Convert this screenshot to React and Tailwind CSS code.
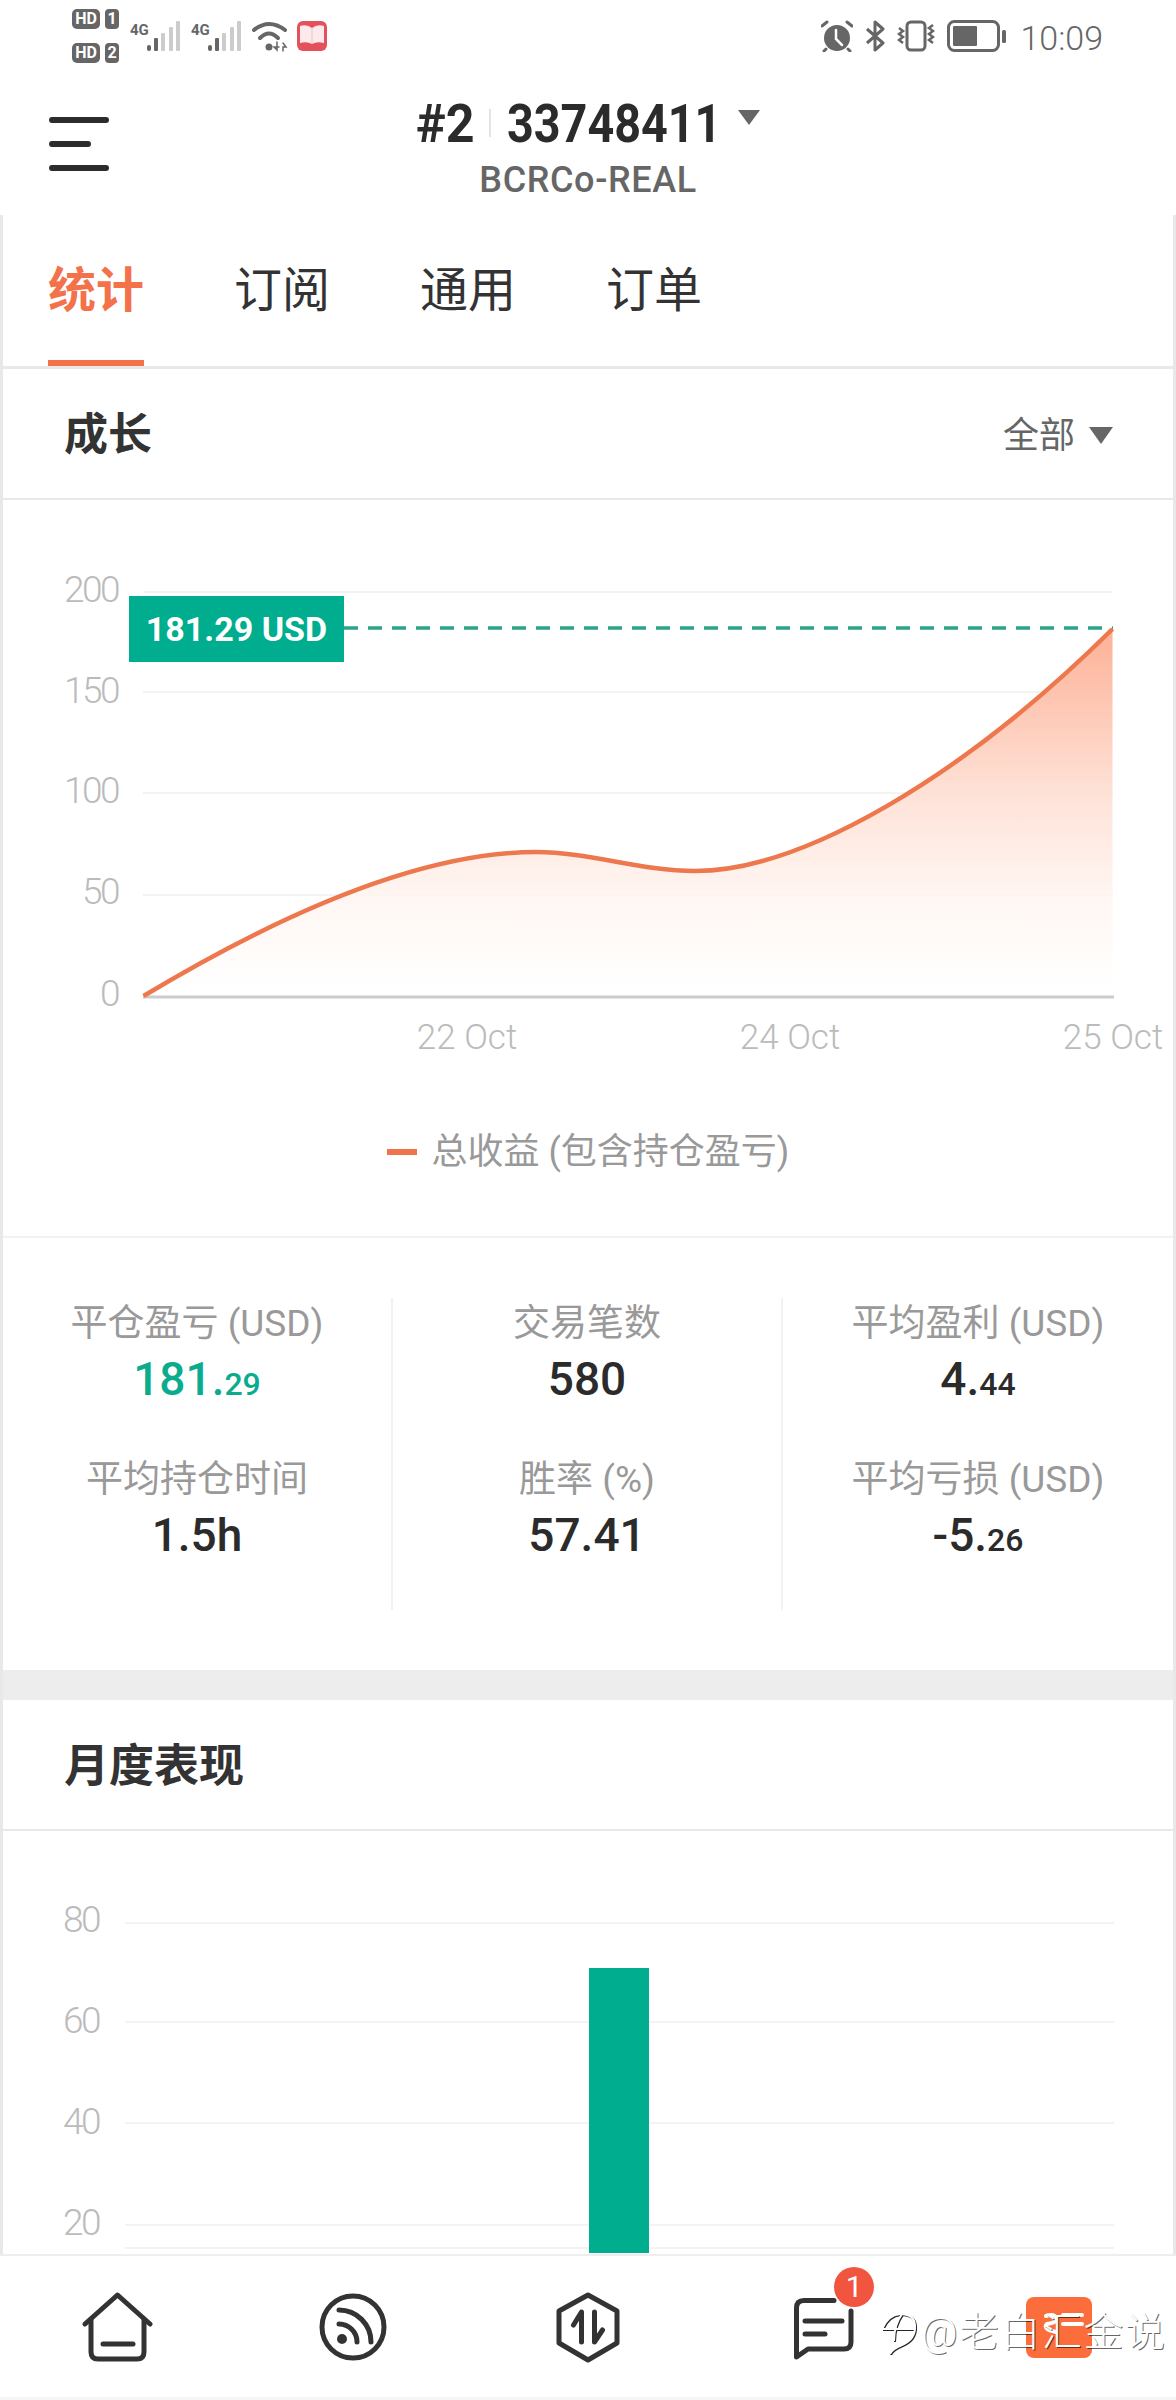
import React from 'react';

// growth line, traced from the chart
const curve =
  'M143.5 996 C250 932 405 852 536 852 C590 852 640 871 695 871 C800 871 960 780 1112.5 629';

const SignalIcon = () => (
  <svg width="55" height="36" viewBox="0 0 55 36">
    <text x="0" y="17" className="fill-[#666] text-[15px] font-bold">4G</text>
    <rect x="17" y="27" width="4" height="6" rx="2" fill="#666" />
    <rect x="24" y="20" width="4" height="13" rx="1" fill="#666" />
    <rect x="31" y="15" width="4" height="18" rx="1" fill="#ccc" />
    <rect x="39" y="9" width="4" height="24" rx="1" fill="#ccc" />
    <rect x="46" y="3" width="4" height="30" rx="1" fill="#ccc" />
  </svg>
);

const WifiIcon = () => (
  <svg width="36" height="34" viewBox="0 0 36 34" fill="none" stroke="#666" strokeWidth="4" strokeLinecap="round">
    <path d="M2 12Q17 0 33 12" />
    <path d="M8 20Q17 11 26 20" />
    <circle cx="17" cy="29" r="3.5" fill="#666" stroke="none" />
    <path d="M25 24v8l-3-3h5" strokeWidth="1.5" />
    <path d="M31 25l3 4h-3v4" strokeWidth="1.5" />
  </svg>
);

const BookIcon = () => (
  <svg width="30" height="30" viewBox="0 0 30 30">
    <rect width="30" height="30" rx="6" fill="#e2515c" />
    <path d="M3 5Q10 3 15 7Q20 3 27 5V22Q20 20 15 23Q10 20 3 22Z" fill="#fbe9ec" />
    <path d="M15 7V23" stroke="#f3c3c9" strokeWidth="1" />
  </svg>
);

const AlarmIcon = () => (
  <svg width="32" height="32" viewBox="0 0 32 32" fill="none" strokeLinecap="round">
    <circle cx="16" cy="18" r="13" fill="#666" />
    <path d="M15 10V19L21 25" stroke="#fff" strokeWidth="2.5" />
    <path d="M1 6L6 2M31 6L26 2M5 29L3 31M27 29L29 31" stroke="#666" strokeWidth="3" />
  </svg>
);

const BluetoothIcon = () => (
  <svg width="21" height="32" viewBox="0 0 21 32" fill="none" stroke="#666" strokeWidth="3" strokeLinejoin="round">
    <path d="M2 9L18 23L10 30V2L18 9L2 23" />
  </svg>
);

const VibrateIcon = () => (
  <svg width="38" height="32" viewBox="0 0 38 32" fill="none" stroke="#666" strokeWidth="2.5">
    <rect x="10" y="2" width="18" height="28" rx="4" strokeWidth="3" />
    <path d="M2 8l4 3l-4 3l4 3l-4 3l4 3" />
    <path d="M36 5l-4 3l4 3l-4 3l4 3l-4 3l4 3" />
  </svg>
);

const BatteryIcon = () => (
  <svg width="59" height="32" viewBox="0 0 59 32">
    <rect x="1.5" y="1.5" width="50" height="29" rx="6" fill="none" stroke="#666" strokeWidth="3" />
    <rect x="6" y="6" width="24" height="20" rx="1" fill="#666" />
    <rect x="55" y="10" width="4" height="13" rx="1.5" fill="#666" />
  </svg>
);

const HdBadge = ({ n }) => (
  <div className="flex gap-[5px] h-[20px] text-white text-[16px] font-bold leading-[20px] text-center">
    <span className="w-[28px] bg-[#666] rounded-[5px]">HD</span>
    <span className="w-[14px] bg-[#666] rounded-[4px]">{n}</span>
  </div>
);

const StatusBar = () => (
  <div className="h-[70px] flex justify-between">
    <div className="flex items-start pl-[72px] pt-[9px]">
      <div className="flex flex-col gap-[14px] w-[47px]">
        <HdBadge n="1" />
        <HdBadge n="2" />
      </div>
      <div className="ml-[11px] mt-[9px]"><SignalIcon /></div>
      <div className="ml-[6px] mt-[9px]"><SignalIcon /></div>
      <div className="ml-[6px] mt-[9px]"><WifiIcon /></div>
      <div className="ml-[9px] mt-[12px]"><BookIcon /></div>
    </div>
    <div className="flex items-start pr-[73px] pt-[20px]">
      <AlarmIcon />
      <div className="ml-[12px]"><BluetoothIcon /></div>
      <div className="ml-[11px]"><VibrateIcon /></div>
      <div className="ml-[12px]"><BatteryIcon /></div>
      <span className="ml-[14px] text-[34px] font-light leading-[36px] text-[#666]">10:09</span>
    </div>
  </div>
);

const Header = () => (
  <div className="h-[145px] grid grid-cols-[1fr_auto_1fr]">
    <div className="pl-[49px] pt-[47px] flex flex-col gap-[18px]">
      <div className="w-[60px] h-[6px] rounded-full bg-[#2c2c2c]" />
      <div className="w-[42px] h-[6px] rounded-full bg-[#2c2c2c]" />
      <div className="w-[60px] h-[6px] rounded-full bg-[#2c2c2c]" />
    </div>
    <div className="flex flex-col items-center pt-[24px]">
      <div className="flex items-center h-[58px] text-[54px] font-bold text-[#2b2b2b]">
        {/* the app font is narrower than Roboto */}
        <span className="w-[58px] origin-left scale-x-[.93] whitespace-nowrap">#2</span>
        <span className="w-[2px] h-[28px] ml-[15px] mr-[16px] bg-[#e4e4e4]" />
        <span className="w-[211px] origin-left scale-x-[.865] whitespace-nowrap">33748411</span>
        <svg className="ml-[20px] mb-[12px]" width="22" height="15" viewBox="0 0 22 15">
          <polygon points="0,0 22,0 11,15" fill="#666" />
        </svg>
      </div>
      <div className="mt-[6px] text-[36px] leading-[44px] font-medium tracking-[0.6px] text-[#666]">BCRCo-REAL</div>
    </div>
    <div />
  </div>
);

const Tabs = () => (
  <div className="h-[154px] flex gap-[90px] pl-[45px] border-b-[3px] border-[#e8e8e8] text-[48px] text-[#333] whitespace-nowrap">
    <div className="w-[96px] flex items-center justify-center pt-[6px] border-b-[6px] border-[#f3724a] text-[#f3724a] font-bold">统计</div>
    <div className="w-[96px] flex items-center justify-center pt-[6px] pb-[6px]">订阅</div>
    <div className="w-[96px] flex items-center justify-center pt-[6px] pb-[6px]">通用</div>
    <div className="w-[96px] flex items-center justify-center pt-[6px] pb-[6px]">订单</div>
  </div>
);

const GrowthChart = () => (
  <div className="relative h-[590px]">
    <svg className="block" width="1170" height="590" viewBox="3 500 1170 590">
      <defs>
        <linearGradient id="area" gradientUnits="userSpaceOnUse" x1="0" y1="629" x2="0" y2="990">
          <stop offset="0" stopColor="#fdab8e" />
          <stop offset="0.45" stopColor="#fedfd3" />
          <stop offset="0.75" stopColor="#fff6f2" />
          <stop offset="1" stopColor="#ffffff" />
        </linearGradient>
      </defs>
      {[592, 692, 793, 895].map((y) => (
        <line key={y} x1="143" x2="1113" y1={y} y2={y} stroke="#f3f3f3" strokeWidth="2" />
      ))}
      <path d={`${curve} V997 H143.5 Z`} fill="url(#area)" fillOpacity="0.93" />
      <line x1="143" x2="1114" y1="997" y2="997" stroke="#ccc" strokeWidth="3" />
      <line x1="344" x2="1113" y1="628" y2="628" stroke="#2aa58a" strokeWidth="3.5" strokeDasharray="14 10" />
      <path d={curve} fill="none" stroke="#ee784e" strokeWidth="4.5" />
      {[['200', 602], ['150', 703], ['100', 803], ['50', 904], ['0', 1006]].map(([t, y]) => (
        <text key={t} x="118" y={y} textAnchor="end" className="fill-[#bbb] text-[37px] font-light tracking-[-2.5px]">{t}</text>
      ))}
      {[['22 Oct', 467], ['24 Oct', 790], ['25 Oct', 1113]].map(([t, x]) => (
        <text key={t} x={x} y="1049" textAnchor="middle" className="fill-[#bbb] text-[35px] font-light">{t}</text>
      ))}
    </svg>
    <div className="absolute left-[126px] top-[96px] w-[215px] h-[66px] flex items-center justify-center bg-[#00ad8e] text-white text-[34px] font-bold">
      181.29 USD
    </div>
  </div>
);

const Legend = () => (
  <div className="h-[148px] pb-[22px] flex items-center justify-center gap-[15px] border-b-2 border-[#f2f2f2]">
    <div className="w-[30px] h-[6px] bg-[#f0744b]" />
    <span className="text-[36px] text-[#999]">总收益 (包含持仓盈亏)</span>
  </div>
);

const Stat = ({ label, big, small, color = 'text-[#2b2b2b]' }) => (
  <div className="h-[110px] flex flex-col items-center">
    <div className="h-[50px] text-[37px] leading-[50px] text-[#999]">{label}</div>
    <div className={`h-[60px] text-[46px] leading-[60px] font-medium ${color}`}>
      {big}
      {small && <span className="text-[32px]">{small}</span>}
    </div>
  </div>
);

const StatsGrid = () => (
  <div className="pt-[60px] pb-[60px] grid grid-cols-3">
    <div className="flex flex-col gap-[46px] h-[312px] pt-[1px] border-r-2 border-[#f2f2f2]">
      <Stat label="平仓盈亏 (USD)" big="181." small="29" color="text-[#0bab90]" />
      <Stat label="平均持仓时间" big="1.5h" />
    </div>
    <div className="flex flex-col gap-[46px] h-[312px] pt-[1px] border-r-2 border-[#f2f2f2]">
      <Stat label="交易笔数" big="580" />
      <Stat label="胜率 (%)" big="57.41" />
    </div>
    <div className="flex flex-col gap-[46px] h-[312px] pt-[1px]">
      <Stat label="平均盈利 (USD)" big="4." small="44" />
      <Stat label="平均亏损 (USD)" big="-5." small="26" />
    </div>
  </div>
);

const MonthlyChart = () => (
  <svg className="block" width="1170" height="422" viewBox="3 1833 1170 422">
    {[1925, 2024, 2125, 2227, 2250].map((y) => (
      <line key={y} x1="125" x2="1114" y1={y} y2={y} stroke="#f3f3f3" strokeWidth="2" />
    ))}
    <rect x="589" y="1970" width="60" height="285" fill="#00ad8e" />
    {[['80', 1934], ['60', 2035], ['40', 2136], ['20', 2237]].map(([t, y]) => (
      <text key={t} x="99" y={y} textAnchor="end" className="fill-[#bbb] text-[37px] font-light tracking-[-2.5px]">{t}</text>
    ))}
  </svg>
);

const navIcon = { width: 72, height: 72, viewBox: '0 0 72 72', fill: 'none', stroke: '#333', strokeWidth: 5, strokeLinecap: 'round', strokeLinejoin: 'round' };

const BottomNav = () => (
  <div className="relative h-[146px] grid grid-cols-5 items-center bg-white border-t-2 border-[#eee] border-b-[3px] border-b-[#f6f6f6]">
    <div className="flex justify-center">
      <svg {...navIcon}>
        <path d="M3 33L35.5 4L68 33" />
        <path d="M9 28V61Q9 68 16 68H55Q62 68 62 61V28" />
        <path d="M21 53H51" />
      </svg>
    </div>
    <div className="flex justify-center">
      <svg {...navIcon}>
        <circle cx="36" cy="36" r="31" />
        <circle cx="25" cy="48" r="5" fill="#333" stroke="none" />
        <path d="M22 33A18 18 0 0 1 40 51" />
        <path d="M22 19A32 32 0 0 1 54 51" />
      </svg>
    </div>
    <div className="flex justify-center">
      <svg {...navIcon}>
        <path d="M36 4L65 20V52L36 69L7 52V20Z" />
        <path d="M29.5 51V21L21.5 34" />
        <path d="M42.5 21V51L50.5 39" />
      </svg>
    </div>
    <div className="flex justify-center">
      <div className="relative">
        <svg className="block" {...navIcon}>
          <path d="M47 9.5H17Q9.5 9.5 9.5 17V66L21 58H57Q64 58 64 51V20" />
          <path d="M18 30H55" />
          <path d="M18 43H38" />
        </svg>
        <div className="absolute left-[47px] top-[-24px] w-[40px] h-[40px] rounded-full bg-[#f2553f] text-white text-[30px] leading-[40px] text-center">1</div>
      </div>
    </div>
    <div className="flex justify-center">
      <svg width="72" height="72" viewBox="0 0 72 72" fill="none">
        <rect x="4" y="6" width="66" height="61" rx="8" fill="#fb6e3c" />
        <path d="M24 25Q33 22 34 28Q34 32 25 33Q20 38 34 41" stroke="#fff" strokeWidth="4" strokeLinecap="round" />
        <path d="M41 24H60M41 33H60" stroke="#fff" strokeWidth="4" strokeLinecap="round" />
      </svg>
    </div>
    {/* watermark sitting over the nav */}
    <div className="absolute left-[880px] top-[54px] flex items-center text-white font-light text-[40px] tracking-[1.5px] leading-[46px] [text-shadow:1px_1px_0_rgba(0,0,0,0.6)]">
      <svg width="38" height="44" viewBox="0 0 38 44" fill="none" stroke="#fff" strokeWidth="2" className="mr-[3px] drop-shadow-[1px_1px_0_rgba(0,0,0,0.85)]">
        <path d="M2 18Q8 4 20 3Q34 3 35 14Q36 28 22 34Q12 38 10 43" />
        <path d="M2 18H34" />
        <path d="M22 3Q14 14 14 30" />
      </svg>
      <span>@老白汇金说</span>
    </div>
  </div>
);

const App = () => (
  <div className="w-[1176px] h-[2400px] flex flex-col bg-white overflow-hidden font-['Roboto','Noto_Sans_CJK_SC',sans-serif]">
    <StatusBar />
    <Header />
    <div className="flex-1 min-h-0 overflow-hidden border-x-[3px] border-[#e8e8e8]">
      <Tabs />
      <div className="h-[131px] flex items-center justify-between pl-[61px] pr-[60px] pt-[2px] border-b-2 border-[#e8e8e8]">
        <span className="text-[44px] font-bold text-[#333]">成长</span>
        <div className="flex items-center gap-[14px] pt-[2px] text-[36px] text-[#666]">
          全部
          <svg width="24" height="17" viewBox="0 0 24 17"><polygon points="0,0 24,0 12,17" fill="#666" /></svg>
        </div>
      </div>
      <GrowthChart />
      <Legend />
      <StatsGrid />
      <div className="h-[30px] bg-[#ededed]" />
      <div className="h-[131px] flex items-center pl-[61px] pt-[4px] border-b-2 border-[#e8e8e8]">
        <span className="text-[45px] font-bold text-[#333]">月度表现</span>
      </div>
      <MonthlyChart />
    </div>
    <BottomNav />
  </div>
);

export default App;
